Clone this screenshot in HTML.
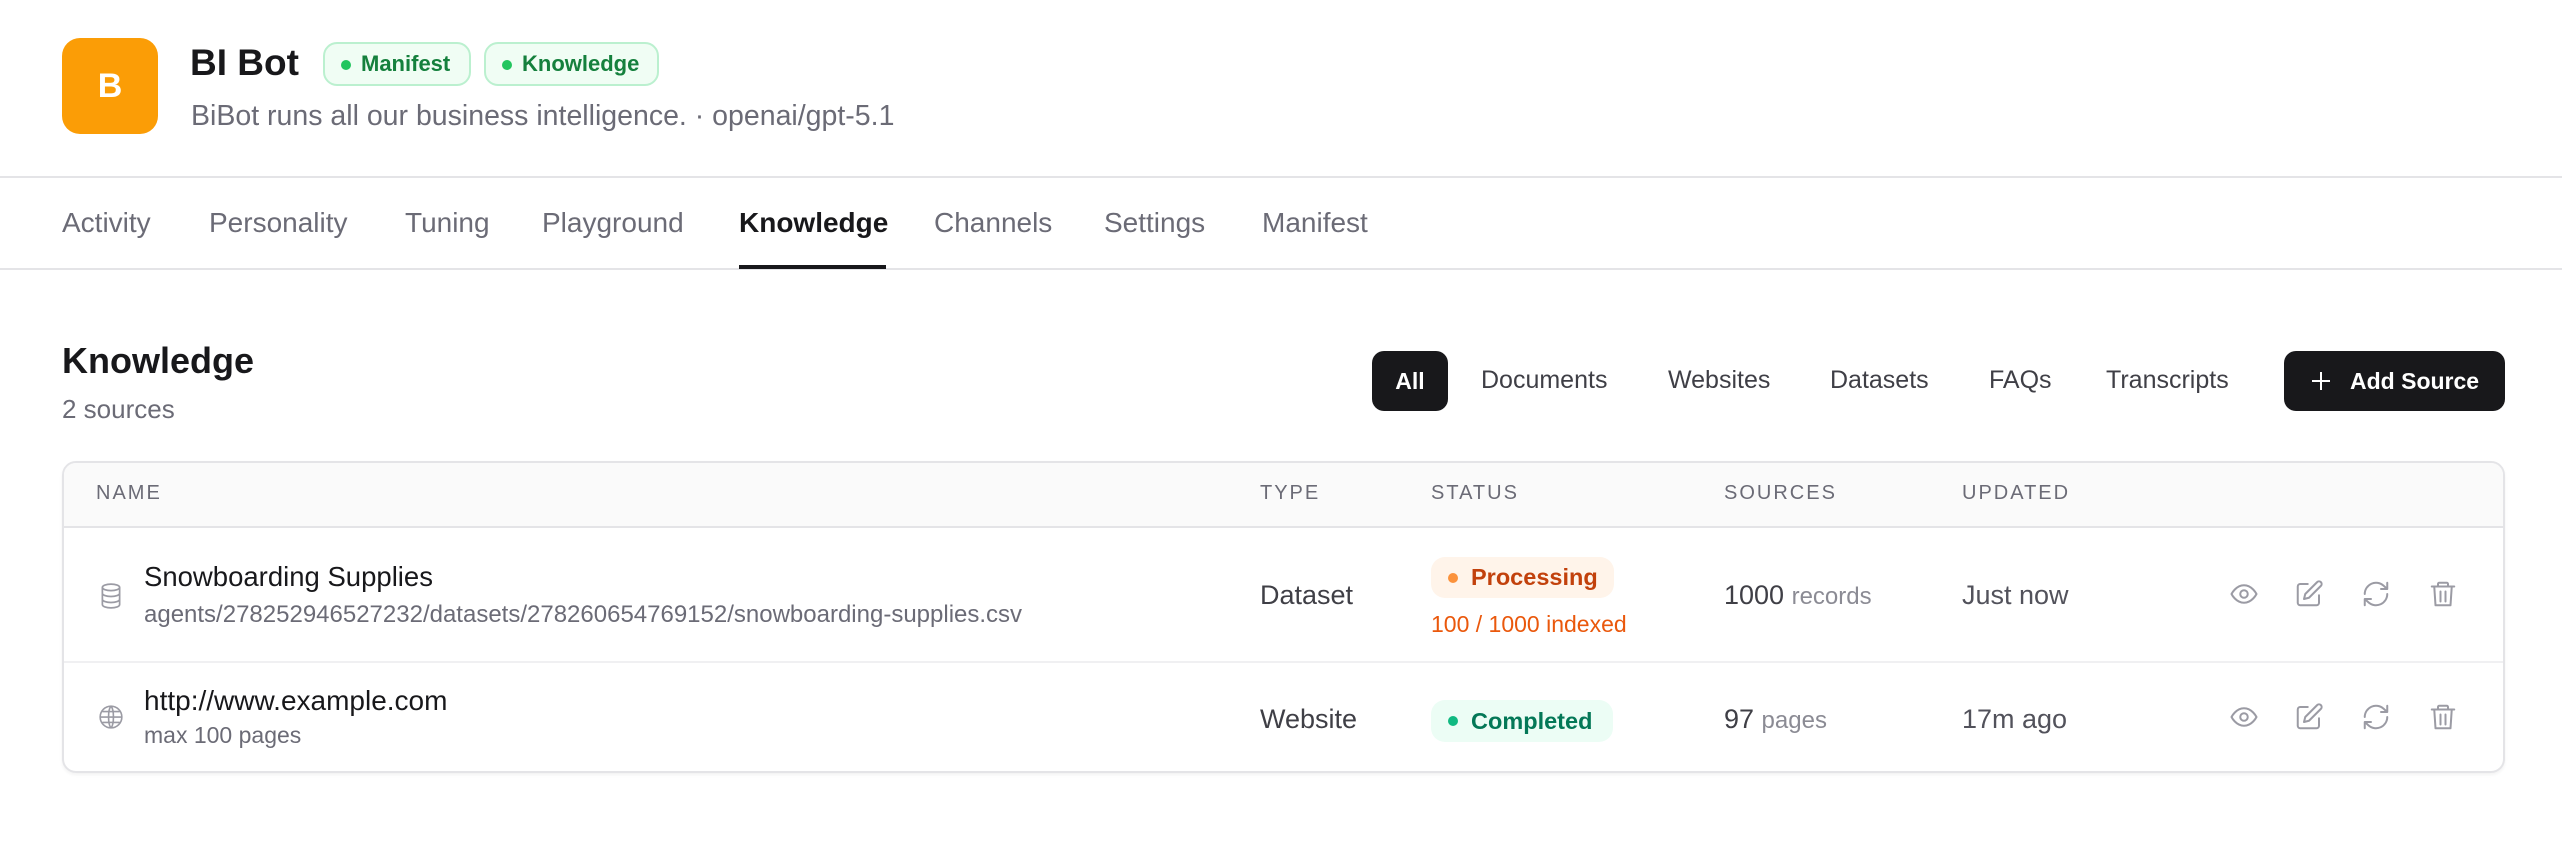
<!DOCTYPE html>
<html><head><meta charset="utf-8"><style>
*{margin:0;padding:0;box-sizing:border-box}
body{width:2562px;height:864px;background:#fff;font-family:"Liberation Sans",sans-serif;position:relative;overflow:hidden;color:#18181b}
.a{position:absolute;white-space:nowrap}
.gray{color:#6b6b76}
.tab{position:absolute;top:207px;font-size:28px;color:#6b6b76}
.badge{position:absolute;top:42px;height:44px;border:2px solid #bbf0cf;background:#f0fdf4;border-radius:14px;color:#15803d;font-size:22px;font-weight:bold;line-height:40px;padding-left:36px}
.badge:before{content:"";position:absolute;left:16px;top:16px;width:10px;height:10px;border-radius:50%;background:#22c55e}
.flt{position:absolute;top:366px;font-size:25px;color:#3f3f46}
.th{position:absolute;top:482px;font-size:20px;letter-spacing:2px;color:#6b6b76}
.ic{position:absolute;width:30px;height:30px}
.ic svg{width:30px;height:30px;fill:none;stroke:#9b9ba4;stroke-width:1.6;stroke-linecap:round;stroke-linejoin:round}
</style></head><body>
<div class="a" style="left:62px;top:38px;width:96px;height:96px;border-radius:18px;background:#fb9d06;color:#fff;font-weight:bold;font-size:34px;text-align:center;line-height:96px">B</div>
<div class="a" style="left:190px;top:42px;font-size:37px;font-weight:bold">BI Bot</div>
<div class="badge" style="left:323px;width:148px">Manifest</div>
<div class="badge" style="left:484px;width:175px">Knowledge</div>
<div class="a gray" style="left:191px;top:100px;font-size:28.5px">BiBot runs all our business intelligence. · openai/gpt-5.1</div>
<div class="a" style="left:0;top:176px;width:2562px;height:2px;background:#e4e4e7"></div>
<div class="tab" style="left:62px">Activity</div>
<div class="tab" style="left:209px">Personality</div>
<div class="tab" style="left:405px">Tuning</div>
<div class="tab" style="left:542px">Playground</div>
<div class="tab" style="left:739px;color:#18181b;font-weight:bold">Knowledge</div>
<div class="tab" style="left:934px">Channels</div>
<div class="tab" style="left:1104px">Settings</div>
<div class="tab" style="left:1262px">Manifest</div>
<div class="a" style="left:0;top:268px;width:2562px;height:2px;background:#e4e4e7"></div>
<div class="a" style="left:739px;top:265px;width:147px;height:4px;background:#18181b"></div>

<div class="a" style="left:62px;top:340px;font-size:36px;font-weight:bold">Knowledge</div>
<div class="a gray" style="left:62px;top:394px;font-size:26px">2 sources</div>
<div class="a" style="left:1372px;top:351px;width:76px;height:60px;border-radius:12px;background:#18181b;color:#fff;font-weight:bold;font-size:23px;text-align:center;line-height:60px">All</div>
<div class="flt" style="left:1481px">Documents</div>
<div class="flt" style="left:1668px">Websites</div>
<div class="flt" style="left:1830px">Datasets</div>
<div class="flt" style="left:1989px">FAQs</div>
<div class="flt" style="left:2106px">Transcripts</div>
<div class="a" style="left:2284px;top:351px;width:221px;height:60px;border-radius:12px;background:#18181b;color:#fff;font-weight:bold;font-size:23px;line-height:60px;padding-left:66px">Add Source</div>
<svg class="a" style="left:2309px;top:369px" width="24" height="24" viewBox="0 0 24 24"><path d="M12 3v18M3 12h18" stroke="#fff" stroke-width="2"/></svg>

<div class="a" style="left:62px;top:461px;width:2443px;height:312px;border:2px solid #e4e4e7;border-radius:14px;overflow:hidden;box-shadow:0 2px 3px rgba(0,0,0,.05)">
<div style="height:65px;background:#fafafa;border-bottom:2px solid #e4e4e7"></div>
<div style="position:absolute;top:198px;left:0;right:0;height:2px;background:#f0f0f2"></div>
</div>
<div class="th" style="left:96px">NAME</div>
<div class="th" style="left:1260px">TYPE</div>
<div class="th" style="left:1431px">STATUS</div>
<div class="th" style="left:1724px">SOURCES</div>
<div class="th" style="left:1962px">UPDATED</div>

<!-- row 1 -->
<svg class="a" style="left:98px;top:582px" width="26" height="28" viewBox="0 0 24 26" fill="none" stroke="#9b9ba4" stroke-width="1.6"><ellipse cx="12" cy="5" rx="8" ry="3"/><path d="M4 5v16c0 1.7 3.6 3 8 3s8-1.3 8-3V5M4 10.5c0 1.7 3.6 3 8 3s8-1.3 8-3M4 16c0 1.7 3.6 3 8 3s8-1.3 8-3"/></svg>
<div class="a" style="left:144px;top:561px;font-size:27.5px">Snowboarding Supplies</div>
<div class="a gray" style="left:144px;top:601px;font-size:24px">agents/278252946527232/datasets/278260654769152/snowboarding-supplies.csv</div>
<div class="a" style="left:1260px;top:580px;font-size:27px;color:#3f3f46">Dataset</div>
<div class="a" style="left:1431px;top:557px;width:183px;height:41px;border-radius:14px;background:#fff4ea;color:#c2410c;font-weight:bold;font-size:23.5px;line-height:41px;padding-left:40px">Processing<span style="position:absolute;left:17px;top:16px;width:10px;height:10px;border-radius:50%;background:#fb923c"></span></div>
<div class="a" style="left:1431px;top:611px;font-size:23px;color:#ea580c">100 / 1000 indexed</div>
<div class="a" style="left:1724px;top:580px;font-size:27px;color:#3f3f46">1000 <span style="font-size:24px;color:#8b8b94">records</span></div>
<div class="a" style="left:1962px;top:580px;font-size:27px;color:#52525b">Just now</div>

<!-- row 2 -->
<svg class="a" style="left:98px;top:704px" width="26" height="26" viewBox="0 0 24 24" fill="none" stroke="#9b9ba4" stroke-width="1.5"><circle cx="12" cy="12" r="10"/><path d="M2 12h20M12 2c3 3 3 17 0 20M12 2c-3 3-3 17 0 20M4 7h16M4 17h16"/></svg>
<div class="a" style="left:144px;top:685px;font-size:28px">http://www.example.com</div>
<div class="a gray" style="left:144px;top:722px;font-size:23px">max 100 pages</div>
<div class="a" style="left:1260px;top:704px;font-size:27px;color:#3f3f46">Website</div>
<div class="a" style="left:1431px;top:700px;width:182px;height:42px;border-radius:14px;background:#ecfdf5;color:#047857;font-weight:bold;font-size:23.5px;line-height:42px;padding-left:40px">Completed<span style="position:absolute;left:17px;top:16px;width:10px;height:10px;border-radius:50%;background:#10b981"></span></div>
<div class="a" style="left:1724px;top:704px;font-size:27px;color:#3f3f46">97 <span style="font-size:24px;color:#8b8b94">pages</span></div>
<div class="a" style="left:1962px;top:704px;font-size:27px;color:#52525b">17m ago</div>

<!-- action icons -->
<div class="ic" style="left:2229px;top:579px"><svg viewBox="0 0 24 24"><path d="M2 12s3.5-7 10-7 10 7 10 7-3.5 7-10 7S2 12 2 12z"/><circle cx="12" cy="12" r="3"/></svg></div>
<div class="ic" style="left:2294px;top:579px"><svg viewBox="0 0 24 24"><path d="M11 4H5a2 2 0 0 0-2 2v13a2 2 0 0 0 2 2h13a2 2 0 0 0 2-2v-6"/><path d="M18.5 2.5a2.1 2.1 0 0 1 3 3L12 15l-4 1 1-4z"/></svg></div>
<div class="ic" style="left:2361px;top:579px"><svg viewBox="0 0 24 24"><path d="M3 12a9 9 0 0 1 15-6.7L21 8M21 3v5h-5M21 12a9 9 0 0 1-15 6.7L3 16M3 21v-5h5"/></svg></div>
<div class="ic" style="left:2428px;top:579px"><svg viewBox="0 0 24 24"><path d="M3 6h18M8 6V4a1 1 0 0 1 1-1h6a1 1 0 0 1 1 1v2M5 6l1 15h12l1-15M10 10v8M14 10v8"/></svg></div>

<div class="ic" style="left:2229px;top:702px"><svg viewBox="0 0 24 24"><path d="M2 12s3.5-7 10-7 10 7 10 7-3.5 7-10 7S2 12 2 12z"/><circle cx="12" cy="12" r="3"/></svg></div>
<div class="ic" style="left:2294px;top:702px"><svg viewBox="0 0 24 24"><path d="M11 4H5a2 2 0 0 0-2 2v13a2 2 0 0 0 2 2h13a2 2 0 0 0 2-2v-6"/><path d="M18.5 2.5a2.1 2.1 0 0 1 3 3L12 15l-4 1 1-4z"/></svg></div>
<div class="ic" style="left:2361px;top:702px"><svg viewBox="0 0 24 24"><path d="M3 12a9 9 0 0 1 15-6.7L21 8M21 3v5h-5M21 12a9 9 0 0 1-15 6.7L3 16M3 21v-5h5"/></svg></div>
<div class="ic" style="left:2428px;top:702px"><svg viewBox="0 0 24 24"><path d="M3 6h18M8 6V4a1 1 0 0 1 1-1h6a1 1 0 0 1 1 1v2M5 6l1 15h12l1-15M10 10v8M14 10v8"/></svg></div>
</body></html>
